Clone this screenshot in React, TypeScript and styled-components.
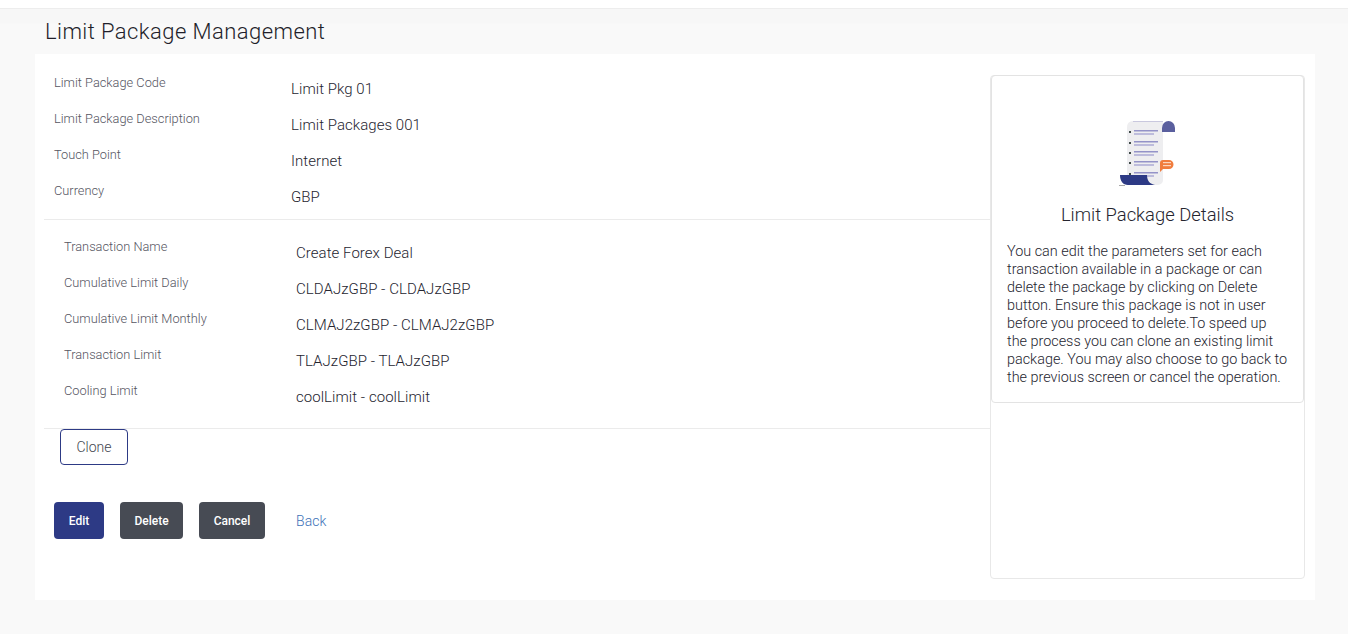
import React from 'react'
import styled, { createGlobalStyle } from 'styled-components'

const GlobalStyle = createGlobalStyle`
  html, body {
    margin: 0;
    padding: 0;
    background: #f9f9f9;
    font-family: Roboto, "Liberation Sans", sans-serif;
    font-weight: 300;
    color: #2c2c3a;
  }
  * { box-sizing: border-box; }
`

const Page = styled.div`
  width: 1348px;
  height: 634px;
  overflow: hidden;
`

const TopBar = styled.div`
  height: 9px;
  background: #fff;
  border-bottom: 1px solid #ededed;
`

const TitleBand = styled.div`
  height: 45px;
  padding: 10px 0 0 45px;
  background: linear-gradient(#f7f7f7 0, #f7f7f7 14px, #f9f9f9 15px);
`

const Title = styled.h1`
  margin: 0;
  font-size: 22px;
  line-height: 26px;
  font-weight: 300;
  letter-spacing: 0.43px;
  color: #1f1f2b;
`

const Card = styled.main`
  display: flex;
  width: 1280px;
  height: 546px;
  margin-left: 35px;
  background: #fff;
`

const Content = styled.section`
  width: 955px;
  padding-top: 17px;
`

const Rows = styled.div<{ $inset: number }>`
  padding: 0 0 4px ${p => p.$inset}px;
  margin-left: 9px;
  border-bottom: 1px solid #ebebeb;
`

const Row = styled.div<{ $labelWidth: number }>`
  display: grid;
  grid-template-columns: ${p => p.$labelWidth}px 1fr;
  height: 36px;
`

const Label = styled.div`
  font-size: 12.8px;
  line-height: 24px;
  color: #55555f;
`

const Value = styled.div`
  padding-top: 6px;
  font-size: 15px;
  line-height: 24px;
  letter-spacing: 0.05px;
  color: #25252f;
`

const SecondRows = styled(Rows)`
  padding-top: 15px;
  padding-bottom: 13px;
`

const CloneButton = styled.button`
  display: block;
  width: 68px;
  height: 36px;
  margin-left: 25px;
  background: #fff;
  border: 1px solid #2d3a85;
  border-radius: 4px;
  font: 300 14px Roboto, sans-serif;
  color: #3f4650;
`

const Actions = styled.div`
  display: flex;
  align-items: center;
  margin: 37px 0 0 19px;
`

const ActionButton = styled.button<{ $primary?: boolean; $width: number }>`
  width: ${p => p.$width}px;
  height: 37px;
  margin-right: 16px;
  border: 0;
  border-radius: 4px;
  background: ${p => (p.$primary ? '#2d3a85' : '#474b54')};
  color: #fff;
  font: 500 12px Roboto, sans-serif;
`

const BackLink = styled.a`
  margin-left: 15px;
  font-size: 14px;
  letter-spacing: 0.1px;
  color: #3d72b8;
`

const Aside = styled.aside`
  width: 315px;
  height: 504px;
  margin-top: 21px;
  border: 1px solid #e8e8e8;
  border-radius: 4px;
`

const HelpBox = styled.div`
  height: 328px;
  margin-top: -1px;
  padding: 44px 15px 0 15px;
  border: 1px solid #e3e3e3;
  border-radius: 4px;
  text-align: center;
`

const HelpIcon = styled.svg`
  display: block;
  margin: 0 auto;
`

const HelpTitle = styled.h2`
  margin: 15px 0 16px;
  font-size: 18.4px;
  line-height: 24px;
  font-weight: 300;
  color: #25252f;
`

const HelpText = styled.p`
  margin: 0;
  font-size: 14.4px;
  line-height: 18px;
  text-align: left;
  color: #25252f;
`

const ScrollIcon = () => (
  <HelpIcon width="58" height="68" viewBox="0 0 58 68">
    <path d="M8 8a6 6 0 0 1 6-7h30v59a5 5 0 0 1-5 5H8z" fill="#eeeef0" />
    <rect x="14" y="1" width="30" height="1" fill="#c9c8de" />
    <path d="M43 12V8a6.500 7 0 0 1 13 0v4z" fill="#5a5f9e" />
    {[11, 22, 32, 42, 53].map(y => (
      <g key={y}>
        <rect x="10" y={y} width="2" height="2" fill="#3f4a48" />
        <rect x="15" y={y - 1} width="24" height="1.500" fill="#9493c8" />
        <rect x="15" y={y + 2} width="20" height="2" fill="#bdbcdc" />
      </g>
    ))}
    <rect x="-1" y="65" width="7" height="1" fill="#a8a8a8" />
    <path d="M1 55h27c0 6 3 9 8 10H9c-5 0-8-4-8-10z" fill="#2d3a85" />
    <path d="M41 43a3 3 0 0 1 3-3h6a4.500 4.500 0 0 1 0 9h-6l-3 3z" fill="#f07c3e" />
    <rect x="44" y="42" width="8" height="1.200" fill="#fbd5bf" />
    <rect x="44" y="45" width="8" height="1.200" fill="#fbd5bf" />
  </HelpIcon>
)

const packageRows = [
  ['Limit Package Code', 'Limit Pkg 01'],
  ['Limit Package Description', 'Limit Packages 001'],
  ['Touch Point', 'Internet'],
  ['Currency', 'GBP']
]

const transactionRows = [
  ['Transaction Name', 'Create Forex Deal'],
  ['Cumulative Limit Daily', 'CLDAJzGBP - CLDAJzGBP'],
  ['Cumulative Limit Monthly', 'CLMAJ2zGBP - CLMAJ2zGBP'],
  ['Transaction Limit', 'TLAJzGBP - TLAJzGBP'],
  ['Cooling Limit', 'coolLimit - coolLimit']
]

const App = (): JSX.Element => (
  <Page>
    <GlobalStyle />
    <TopBar />
    <TitleBand>
      <Title>Limit Package Management</Title>
    </TitleBand>
    <Card>
      <Content>
        <Rows $inset={10}>
          {packageRows.map(([label, value]) => (
            <Row key={label} $labelWidth={237}>
              <Label>{label}</Label>
              <Value>{value}</Value>
            </Row>
          ))}
        </Rows>
        <SecondRows $inset={20}>
          {transactionRows.map(([label, value]) => (
            <Row key={label} $labelWidth={232}>
              <Label>{label}</Label>
              <Value>{value}</Value>
            </Row>
          ))}
        </SecondRows>
        <CloneButton>Clone</CloneButton>
        <Actions>
          <ActionButton $primary $width={50}>Edit</ActionButton>
          <ActionButton $width={63}>Delete</ActionButton>
          <ActionButton $width={66}>Cancel</ActionButton>
          <BackLink>Back</BackLink>
        </Actions>
      </Content>
      <Aside>
        <HelpBox>
          <ScrollIcon />
          <HelpTitle>Limit Package Details</HelpTitle>
          <HelpText>
            You can edit the parameters set for each transaction available in a package or can delete the package by
            clicking on Delete button. Ensure this package is not in user before you proceed to delete.To speed up the
            process you can clone an existing limit package. You may also choose to go back to the previous screen or
            cancel the operation.
          </HelpText>
        </HelpBox>
      </Aside>
    </Card>
  </Page>
)

export default App
